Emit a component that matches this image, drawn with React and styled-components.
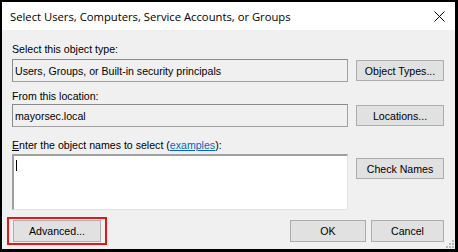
import React from 'react';
import styled, { createGlobalStyle } from 'styled-components';

const GlobalStyle = createGlobalStyle`
    html, body {
        margin: 0;
        padding: 0;
        background: #000;
    }
`;

const Window = styled.div`
    position: relative;
    box-sizing: border-box;
    width: 458px;
    height: 252px;
    border-style: solid;
    border-color: #000;
    border-width: 2px 3px 3px 2px;
    background: #f0f0f0;
    display: flex;
    flex-direction: column;
    font-family: "Liberation Sans", Arial, sans-serif;
    font-size: 10.6px;
    color: #000;
`;

const TitleBar = styled.div`
    height: 28px;
    background: #fff;
    display: flex;
    align-items: center;
    justify-content: space-between;
    padding: 0 10px 0 8px;
    font-family: "Open Sans", "Noto Sans", sans-serif;
    font-size: 11.25px;
`;

const Body = styled.div`
    flex: 1;
    position: relative;
    padding: 13px 11px 0 10px;
    display: flex;
    flex-direction: column;
`;

const Label = styled.div`
    line-height: 13px;
    margin-top: ${p => p.$top || 0}px;
`;

const Row = styled.div`
    display: grid;
    grid-template-columns: 336px 88px;
    column-gap: 8px;
    align-items: ${p => (p.$top ? 'start' : 'center')};
    margin-top: ${p => p.$gap || 0}px;
`;

const ReadOnlyBox = styled.div`
    box-sizing: border-box;
    height: 23px;
    border: 1px solid #a0a0a0;
    border-top-color: #8a8a8a;
    border-left-color: #8a8a8a;
    display: flex;
    align-items: center;
    padding-left: 2px;
`;

const TextArea = styled.div`
    box-sizing: border-box;
    height: 56px;
    background: #fff;
    border: 1px solid #e3e3e3;
    border-top: 2px solid #a0a0a0;
    border-left: 2px solid #a0a0a0;
    padding: 4px 2px;
`;

const Caret = styled.span`
    display: block;
    width: 1px;
    height: 11px;
    background: #000;
`;

const Button = styled.button`
    box-sizing: border-box;
    width: ${p => p.$w || 88}px;
    height: ${p => p.$h || 21}px;
    margin-top: ${p => p.$mt || 0}px;
    padding: 0;
    background: #e1e1e1;
    border: 1px solid #adadad;
    border-radius: 0;
    font-family: "Liberation Sans", Arial, sans-serif;
    font-size: 10.6px;
    color: #000;
`;

const Link = styled.a`
    color: #0066cc;
    text-decoration: underline;
`;

const Footer = styled.div`
    display: flex;
    align-items: center;
    margin-top: 7px;
`;

const Highlight = styled.div`
    display: flex;
    margin-left: -5px;
    padding: 1px 4px;
    border: 2px solid #e8141b;
`;

const FooterRight = styled.div`
    margin-left: auto;
    display: flex;
    gap: 5px;
`;

const Grip = styled.svg`
    position: absolute;
    right: 1px;
    bottom: 1px;
`;

function CloseIcon() {
    return (
        <svg width="11" height="11" viewBox="0 0 11 11">
            <path d="M0.5 0.5 L10.5 10.5 M10.5 0.5 L0.5 10.5" stroke="#000" strokeWidth="1" />
        </svg>
    );
}

function App() {
    const dots = [[6, 0], [3, 3], [6, 3], [0, 6], [3, 6], [6, 6]];
    return (
        <>
            <GlobalStyle />
            <Window>
                <TitleBar>
                    <span>Select Users, Computers, Service Accounts, or Groups</span>
                    <CloseIcon />
                </TitleBar>
                <Body>
                    <Label>Select this object type:</Label>
                    <Row $gap={3}>
                        <ReadOnlyBox>Users, Groups, or Built-in security principals</ReadOnlyBox>
                        <Button>Object Types...</Button>
                    </Row>
                    <Label $top={8}>From this location:</Label>
                    <Row $gap={1}>
                        <ReadOnlyBox>mayorsec.local</ReadOnlyBox>
                        <Button>Locations...</Button>
                    </Row>
                    <Label $top={12}>
                        <u>E</u>nter the object names to select (<Link>examples</Link>):
                    </Label>
                    <Row $gap={2} $top>
                        <TextArea>
                            <Caret />
                        </TextArea>
                        <Button $mt={4}>Check Names</Button>
                    </Row>
                    <Footer>
                        <Highlight>
                            <Button $h={22}>Advanced...</Button>
                        </Highlight>
                        <FooterRight>
                            <Button $w={76} $h={22}>OK</Button>
                            <Button $w={73} $h={22}>Cancel</Button>
                        </FooterRight>
                    </Footer>
                    <Grip width="8" height="8" viewBox="0 0 8 8">
                        {dots.map(([x, y]) => (
                            <rect key={`${x}-${y}`} x={x} y={y} width="2" height="2" fill="#b8b8b8" />
                        ))}
                    </Grip>
                </Body>
            </Window>
        </>
    );
}

export default App;
